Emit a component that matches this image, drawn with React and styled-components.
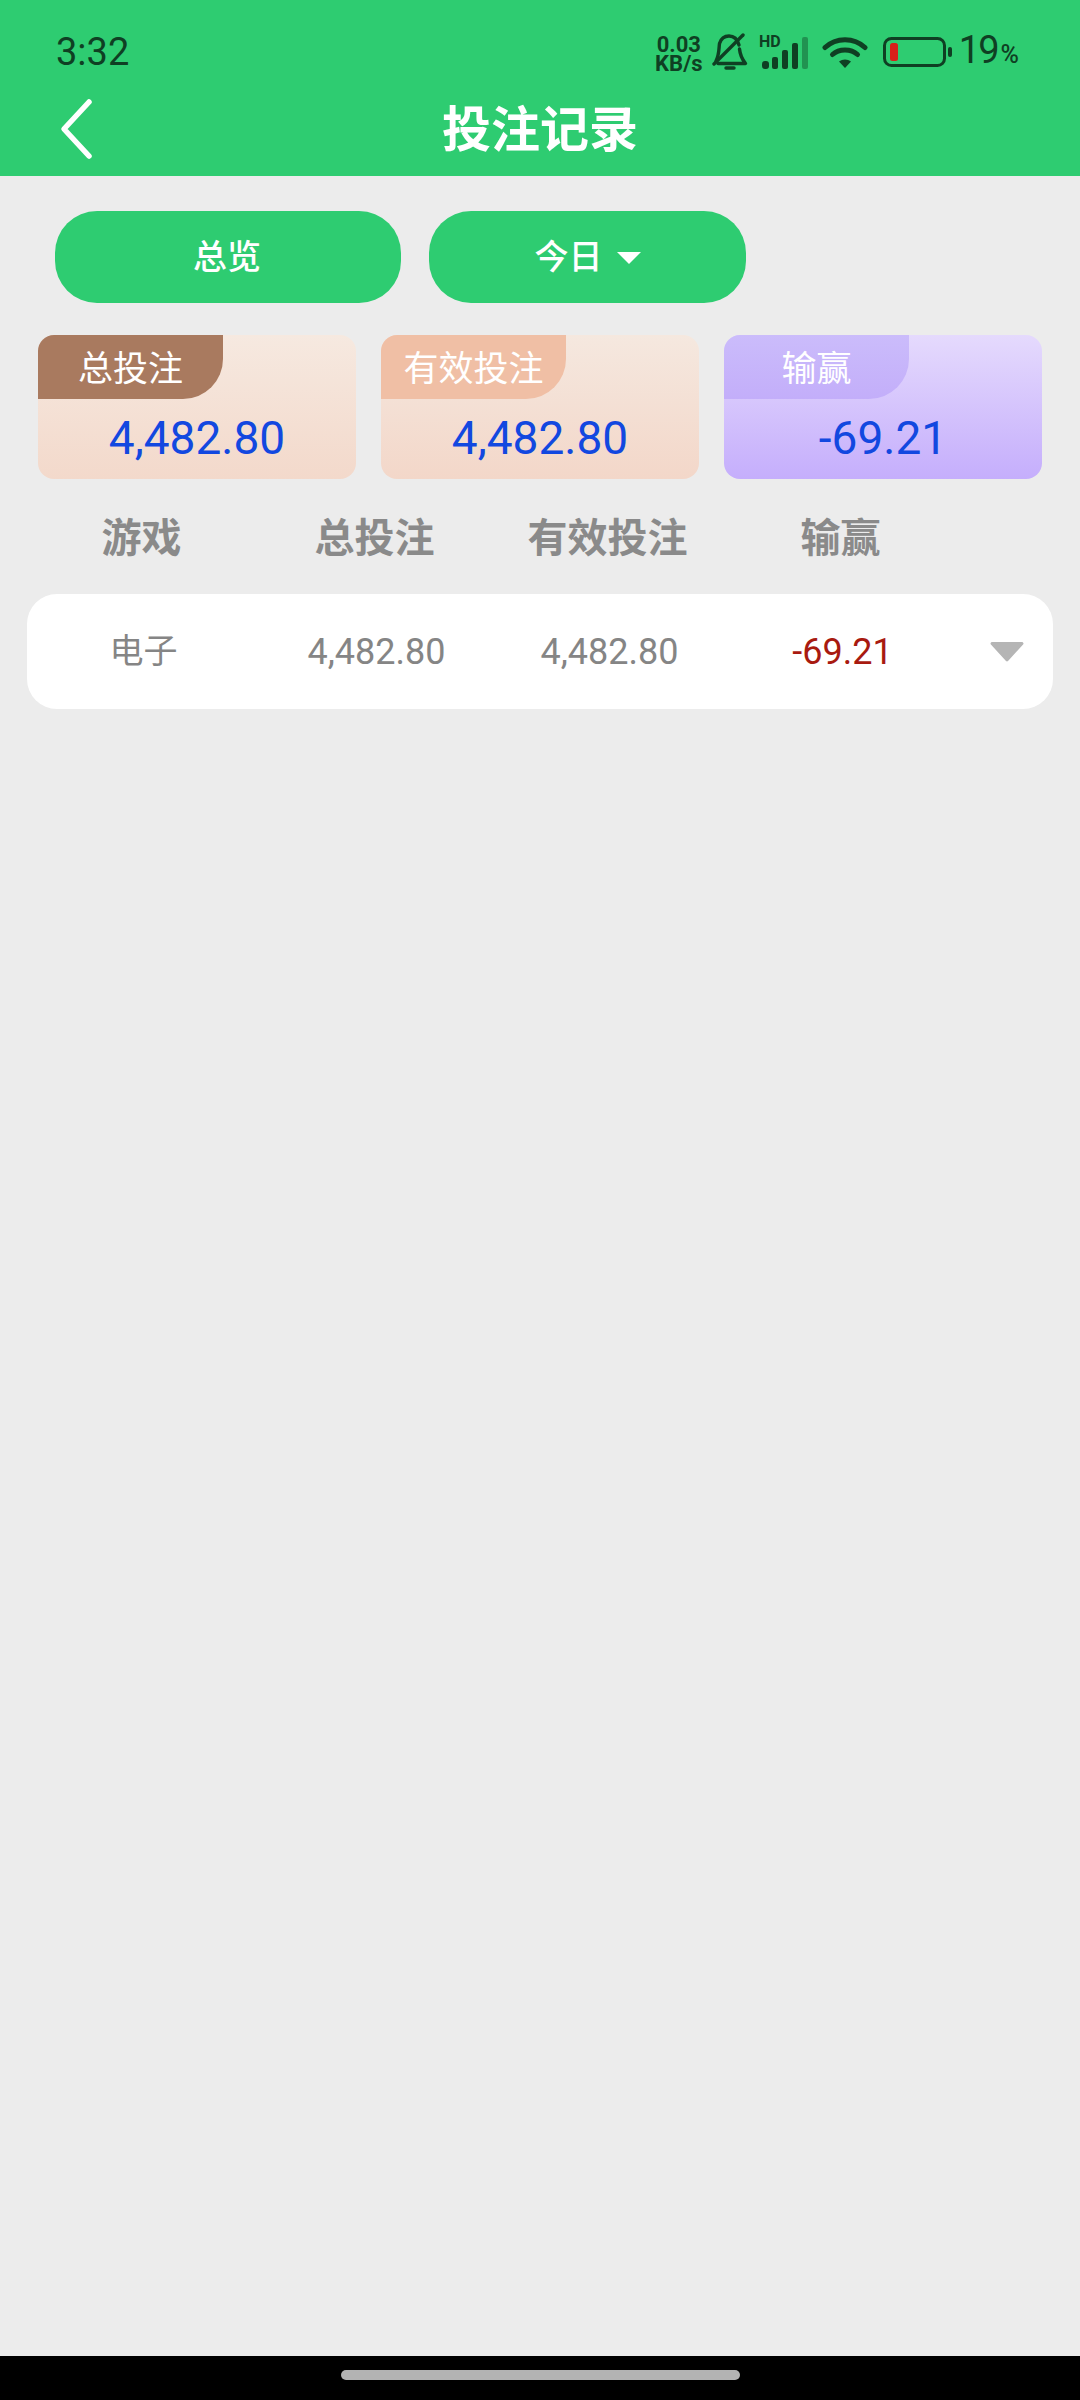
import React from "react";
import styled, { createGlobalStyle } from "styled-components";

const SANS = `Roboto, "Noto Sans", "Noto Sans CJK SC", sans-serif`;
const CJK = `"Noto Sans CJK SC", "Noto Sans", sans-serif`;
const GREEN = "#2ecc71";
const INK = "#0f3f23";

const Global = createGlobalStyle`
  html, body { margin: 0; padding: 0; background: #ececec; }
  #root { width: 1080px; height: 2400px; }
`;

const Screen = styled.div`
  width: 1080px;
  height: 2400px;
  display: flex;
  flex-direction: column;
  background: #ececec;
  font-family: ${CJK};
  overflow: hidden;
`;

const Header = styled.header`
  height: 176px;
  background: ${GREEN};
  display: flex;
  flex-direction: column;
  flex: none;
`;

const StatusBar = styled.div`
  height: 99px;
  padding: 30px 61px 0 56px;
  box-sizing: border-box;
  display: flex;
  justify-content: space-between;
  align-items: flex-start;
  color: ${INK};
`;

const Clock = styled.span`
  font: 400 38px/44px ${SANS};
`;

const StatusIcons = styled.div`
  display: flex;
  align-items: center;
  height: 44px;
`;

const NetSpeed = styled.span`
  display: flex;
  flex-direction: column;
  align-items: center;
  width: 50px;
  margin: 4px 8px 0 0;
  font: 700 22px/19px Roboto, ${CJK};
`;

const Glyph = styled.svg`
  display: block;
  flex: none;
  margin-left: ${(p) => p.$gap || 0}px;
  margin-top: ${(p) => p.$lift || 0}px;
`;

const BatteryLevel = styled.span`
  margin-left: 7px;
  font: 400 38px/44px ${SANS};
  letter-spacing: -2px;
`;

const Percent = styled.span`
  font-size: 25px;
  font-weight: 500;
  letter-spacing: 0;
  margin-left: 3px;
`;

const NavBar = styled.div`
  flex: 1;
  position: relative;
  display: flex;
  align-items: center;
  justify-content: center;
  padding-bottom: 21px;
`;

const BackIcon = styled.svg`
  position: absolute;
  left: 58px;
  top: 0;
`;

const Title = styled.h1`
  margin: 0;
  color: #fff;
  font: 700 49px/58px ${CJK};
`;

const Main = styled.main`
  flex: 1;
  display: flex;
  flex-direction: column;
`;

const Filters = styled.div`
  display: flex;
  gap: 28px;
  padding: 35px 0 0 55px;
`;

const Pill = styled.button`
  width: ${(p) => p.$width}px;
  height: 92px;
  border: 0;
  border-radius: 42px;
  padding: 0 ${(p) => p.$nudge || 0}px 4px 0;
  background: ${GREEN};
  color: #fff;
  font: 500 34px/40px ${CJK};
  display: flex;
  align-items: center;
  justify-content: center;
  gap: 14px;
`;

const Caret = styled.i`
  width: 0;
  height: 0;
  margin-top: 5px;
  border-left: 12px solid transparent;
  border-right: 12px solid transparent;
  border-top: 12px solid #fff;
`;

const Cards = styled.div`
  display: grid;
  grid-template-columns: repeat(3, 318px);
  gap: 25px;
  padding: 32px 0 0 38px;
`;

const Card = styled.div`
  height: 144px;
  border-radius: 16px;
  overflow: hidden;
  display: flex;
  flex-direction: column;
  align-items: center;
  background: linear-gradient(180deg, ${(p) => p.$from}, ${(p) => p.$to});
`;

const CardTag = styled.div`
  align-self: flex-start;
  width: 185px;
  height: 64px;
  border-bottom-right-radius: 40px;
  background: ${(p) => p.$bg};
  color: #fff;
  font: 400 35px/62px ${CJK};
  text-align: center;
`;

const CardValue = styled.div`
  margin-top: 14px;
  color: #1248e0;
  font: 400 46px/50px ${SANS};
`;

const Columns = styled.div`
  display: grid;
  grid-template-columns: repeat(4, 233px);
  align-items: center;
`;

const HeadRow = styled(Columns)`
  padding: 32px 0 0 25px;
  height: 48px;
`;

const HeadCell = styled.span`
  color: #8a8a8a;
  font: 700 40px/48px ${CJK};
  text-align: center;
`;

const RowCard = styled(Columns)`
  position: relative;
  width: 1026px;
  height: 115px;
  margin: 35px 0 0 27px;
  background: #fff;
  border-radius: 30px;
`;

const Cell = styled.span`
  color: ${(p) => p.$ink || "#858585"};
  font: 400 36px/40px ${SANS};
  text-align: center;
`;

const CjkCell = styled(Cell)`
  font: 400 34px/40px ${CJK};
  padding-bottom: 5px;
`;

const RowCaret = styled.svg`
  position: absolute;
  right: 29px;
  top: 47px;
`;

const SystemBar = styled.div`
  flex: none;
  height: 44px;
  background: #000;
  display: flex;
  justify-content: center;
  align-items: center;
  padding-bottom: 7px;
  box-sizing: border-box;
`;

const HomePill = styled.div`
  width: 399px;
  height: 10px;
  border-radius: 5px;
  background: #b3b3b3;
`;

// Muted bell: outline, clapper and the diagonal slash through it
const BellOff = () => (
  <Glyph width="36" height="38" viewBox="0 0 36 38" fill="none" stroke={INK} strokeWidth="3.4" strokeLinecap="round" strokeLinejoin="round">
    <path d="M27 12c-1.500-5.500-5-9-10-9-4.500 0-8 2.800-9.500 7.500C6.800 15 7.500 21 4 28" />
    <path d="M27.500 16c.5 5 2 9.500 6 14.500H6" />
    <path d="M14 35h8" />
    <path d="M2 31 31 2" />
  </Glyph>
);

const Signal = () => (
  <Glyph $gap={11} $lift={-6} width="50" height="42" viewBox="0 -6 50 42" fill={INK}>
    <text x="0" y="13" fontFamily="Roboto, sans-serif" fontWeight="700" fontSize="16" fill={INK}>HD</text>
    <rect x="3" y="27" width="7" height="8" rx="3" />
    <rect x="13" y="23" width="6" height="12" rx="2" />
    <rect x="23" y="16" width="6" height="19" rx="2" />
    <rect x="33" y="9" width="6" height="26" rx="2" />
    <rect x="43" y="3" width="6" height="32" rx="2" opacity="0.4" />
  </Glyph>
);

const Wifi = () => (
  <Glyph $gap={13} width="46" height="33" viewBox="0 0 46 33" fill="none" stroke={INK} strokeWidth="5" strokeLinecap="round">
    <path d="M3 11.500C14 1 32 1 43 11.500" />
    <path d="M10.500 18.500C17 12.500 29 12.500 35.500 18.500" />
    <path d="M23 32l-6-6.500c3.500-2.800 8.500-2.800 12 0Z" fill={INK} stroke="none" />
  </Glyph>
);

const Battery = () => (
  <Glyph $gap={15} width="69" height="30" viewBox="0 0 69 30" fill="none">
    <rect x="1.500" y="1.500" width="60" height="27" rx="7" stroke={INK} strokeWidth="3" />
    <rect x="7" y="6" width="8" height="18" rx="2.500" fill="#d8211a" />
    <rect x="65" y="10" width="4" height="10" rx="2" fill={INK} />
  </Glyph>
);

const summary = [
  { label: "总投注", value: "4,482.80", from: "#f6e9e0", to: "#f3d9cb", tag: "#a97a5f" },
  { label: "有效投注", value: "4,482.80", from: "#f5e8df", to: "#f3d7c9", tag: "#f0bfa5" },
  { label: "输赢", value: "-69.21", from: "#e5dafd", to: "#c5aefc", tag: "linear-gradient(180deg, #cbbcfb, #c3aefa)" },
];

export default function App() {
  return (
    <Screen>
      <Global />
      <Header>
        <StatusBar>
          <Clock>3:32</Clock>
          <StatusIcons>
            <NetSpeed>
              <span>0.03</span>
              <span>KB/s</span>
            </NetSpeed>
            <BellOff />
            <Signal />
            <Wifi />
            <Battery />
            <BatteryLevel>
              19<Percent>%</Percent>
            </BatteryLevel>
          </StatusIcons>
        </StatusBar>
        <NavBar>
          <BackIcon width="40" height="64" viewBox="0 0 40 64" fill="none" stroke="#fff" strokeWidth="5.500" strokeLinecap="round" strokeLinejoin="round">
            <path d="M31 5 6 32l25 27" />
          </BackIcon>
          <Title>投注记录</Title>
        </NavBar>
      </Header>
      <Main>
        <Filters>
          <Pill $width={346} $nudge={2}>总览</Pill>
          <Pill $width={317}>
            今日
            <Caret />
          </Pill>
        </Filters>
        <Cards>
          {summary.map((c) => (
            <Card key={c.label} $from={c.from} $to={c.to}>
              <CardTag $bg={c.tag}>{c.label}</CardTag>
              <CardValue>{c.value}</CardValue>
            </Card>
          ))}
        </Cards>
        <HeadRow>
          <HeadCell>游戏</HeadCell>
          <HeadCell>总投注</HeadCell>
          <HeadCell>有效投注</HeadCell>
          <HeadCell>输赢</HeadCell>
        </HeadRow>
        <RowCard>
          <CjkCell>电子</CjkCell>
          <Cell>4,482.80</Cell>
          <Cell>4,482.80</Cell>
          <Cell $ink="#a81a10">-69.21</Cell>
          <RowCaret width="34" height="21" viewBox="0 0 34 21">
            <path d="M2 1h30a1.500 1.500 0 0 1 1.100 2.500L18 20a1.500 1.500 0 0 1-2 0L.900 3.500A1.500 1.500 0 0 1 2 1Z" fill="#b5b5b5" />
          </RowCaret>
        </RowCard>
      </Main>
      <SystemBar>
        <HomePill />
      </SystemBar>
    </Screen>
  );
}
